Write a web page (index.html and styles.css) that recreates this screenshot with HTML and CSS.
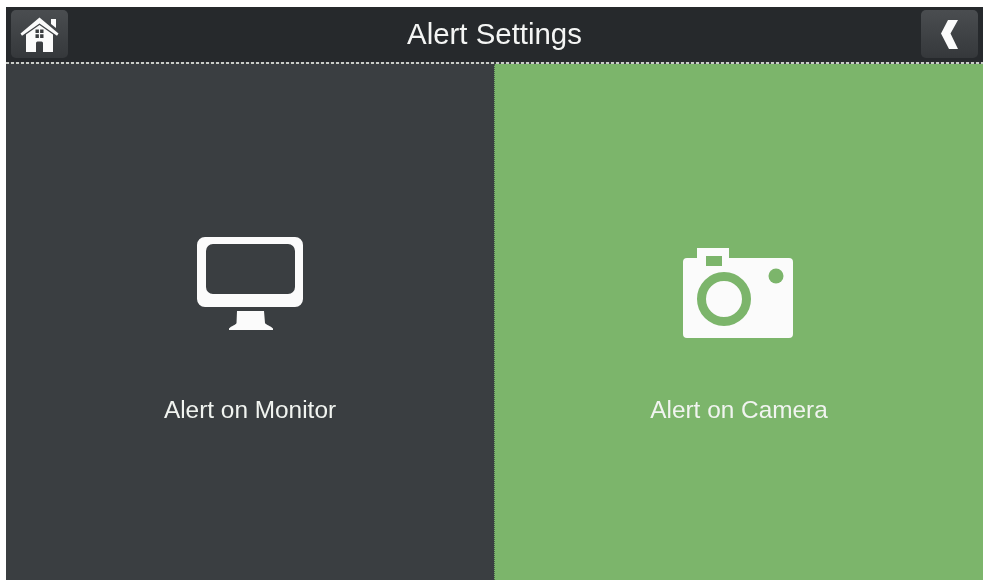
FILE: index.html
```html
<!DOCTYPE html>
<html lang="en">
<head>
<meta charset="utf-8">
<title>Alert Settings</title>
<link rel="stylesheet" href="styles.css">
</head>
<body>
<main class="screen">
  <header class="topbar">
    <button class="tool-btn" aria-label="Home">
      <svg class="tool-icon" viewBox="0 0 57 48" width="57" height="48">
        <path class="white" d="M40 9h5v9l-5-4z"/>
        <path class="white" d="M28.500 7.500 L47.500 23.500 L46 25.800 L28.500 13.500 L11 25.800 L9.500 23.500 Z"/>
        <path class="white" fill-rule="evenodd" d="M28.500 15 L42 24.500 V42 H32 V33 Q32 31.500 30.500 31.500 H26.500 Q25 31.500 25 33 V42 H15 V24.500 Z"/>
        <path class="pane" d="M24.500 19.500h3.400v3.600h-3.400zM29.100 19.500h3.400v3.600h-3.400zM24.500 24.300h3.400v3.600h-3.400zM29.100 24.300h3.400v3.600h-3.400z"/>
      </svg>
    </button>
    <h1 class="title">Alert Settings</h1>
    <button class="tool-btn" aria-label="Back">
      <svg class="tool-icon" viewBox="0 0 57 48" width="57" height="48">
        <path class="white" d="M27 10 H37 L29.500 23.500 L37 39 H28 L20 23.500 Z"/>
      </svg>
    </button>
  </header>
  <div class="rule"></div>
  <section class="panels">
    <div class="panel panel-dark">
      <svg class="panel-icon" viewBox="0 0 120 110" width="120" height="110">
        <path class="white" fill-rule="evenodd" d="M15 2H105A8 8 0 0 1 113 10V64A8 8 0 0 1 105 72H15A8 8 0 0 1 7 64V10A8 8 0 0 1 15 2ZM23 9A7 7 0 0 0 16 16V52A7 7 0 0 0 23 59H98A7 7 0 0 0 105 52V16A7 7 0 0 0 98 9Z"/>
        <path class="white" d="M47 76H74L75 88C76 90 81 91 83 93.500V95H39V93.500C41 91 46 90 46.500 88Z"/>
      </svg>
      <span class="label">Alert on Monitor</span>
    </div>
    <div class="panel panel-green">
      <svg class="panel-icon" viewBox="0 0 120 110" width="120" height="110">
        <path class="white" fill-rule="evenodd" d="M18 13H50V23H110A4 4 0 0 1 114 27V99A4 4 0 0 1 110 103H8A4 4 0 0 1 4 99V27A4 4 0 0 1 8 23H18ZM27 21V31H43V21Z"/>
        <circle class="lens" cx="45" cy="64" r="22.500"/>
        <circle class="cutout" cx="97" cy="41" r="7.500"/>
      </svg>
      <span class="label">Alert on Camera</span>
    </div>
  </section>
</main>
</body>
</html>
```

FILE: styles.css
```css
* { box-sizing: border-box; }

html, body {
  margin: 0;
  height: 100%;
  background: #fff;
}

body {
  padding: 7px 5px 6px 6px;
  font-family: "Liberation Sans", Arial, sans-serif;
}

.screen {
  display: flex;
  flex-direction: column;
  height: 573px;
  overflow: hidden;
  filter: blur(0.45px);
}

.topbar {
  display: flex;
  align-items: flex-start;
  height: 55px;
  padding: 3px 5px 0;
  background: #26292c;
}

.tool-btn {
  flex: none;
  width: 57px;
  height: 48px;
  padding: 0;
  border: 0;
  border-radius: 5px;
  background: linear-gradient(#4a4d50, #35383b);
}

.tool-icon { display: block; }

.white { fill: #fbfbfb; }
.pane { fill: #3b3e41; }

.title {
  flex: 1;
  margin: 0;
  padding-top: 8px;
  color: #f4f5f4;
  font-size: 29.400px;
  font-weight: 400;
  line-height: 32px;
  text-align: center;
}

.rule {
  flex: none;
  height: 2px;
  background: repeating-linear-gradient(90deg, #c9ccc8 0 3px, #3a3d3f 3px 5px);
}

.panels {
  flex: 1;
  display: grid;
  grid-template-columns: 488px 489px;
}

.panel {
  display: flex;
  flex-direction: column;
  align-items: center;
  padding-top: 171px;
  color: #f1f4f0;
}

.panel-dark { background: #3a3e41; }

.panel-green {
  background: #7cb56b;
  border-left: 1px dotted #46604a;
}

.panel-icon { display: block; }

.lens {
  fill: #fbfbfb;
  stroke: #7cb56b;
  stroke-width: 9px;
}

.cutout { fill: #7cb56b; }

.label {
  margin-top: 52px;
  font-size: 24.400px;
  line-height: 26px;
}
```
